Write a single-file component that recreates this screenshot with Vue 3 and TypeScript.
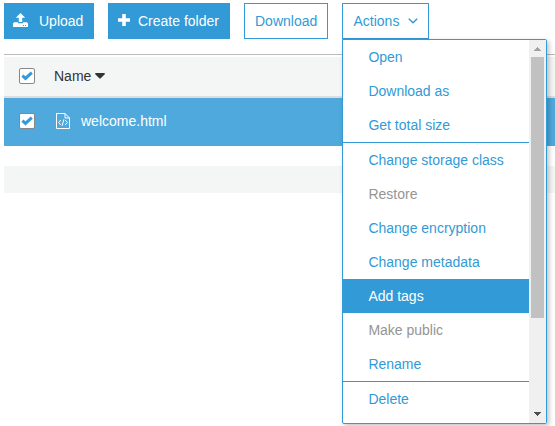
<script setup lang="ts">
interface MenuItem {
  label: string
  disabled?: boolean
  active?: boolean
}

const groups: MenuItem[][] = [
  [{ label: 'Open' }, { label: 'Download as' }, { label: 'Get total size' }],
  [
    { label: 'Change storage class' },
    { label: 'Restore', disabled: true },
    { label: 'Change encryption' },
    { label: 'Change metadata' },
    { label: 'Add tags', active: true },
    { label: 'Make public', disabled: true },
    { label: 'Rename' },
  ],
  [{ label: 'Delete' }],
]
</script>

<template>
  <main class="page">
    <div class="toolbar">
      <button class="btn primary upload">
        <svg width="15" height="14" viewBox="0 0 15 14" fill="currentColor">
          <path d="M7.5 0 L12.2 4.8 H9.2 V9 H5.8 V4.8 H2.8 Z" />
          <path fill-rule="evenodd" d="M1 9.3 H5 V10.3 H10 V9.3 H14 L15 10.5 V14 H0 V10.5 Z M10 12 V13 H11 V12 Z M12 12 V13 H13 V12 Z" />
        </svg>
        <span>Upload</span>
      </button>
      <button class="btn primary create">
        <svg width="12" height="12" viewBox="0 0 12 12" fill="currentColor">
          <path d="M4.2 0 H7.8 V4.2 H12 V7.8 H7.8 V12 H4.2 V7.8 H0 V4.2 H4.2 Z" />
        </svg>
        <span>Create folder</span>
      </button>
      <button class="btn download"><span>Download</span></button>
      <div class="dropdown">
        <button class="btn actions">
          <span>Actions</span>
          <svg width="10" height="6" viewBox="0 0 10 6" fill="none" stroke="currentColor" stroke-width="1.5">
            <path d="M.8 .8 L5 4.8 L9.2 .8" />
          </svg>
        </button>
        <div class="menu">
          <div class="items">
            <ul v-for="(group, index) in groups" :key="index" class="group">
              <li
                v-for="item in group"
                :key="item.label"
                class="item"
                :class="{ disabled: item.disabled, active: item.active }"
              >
                {{ item.label }}
              </li>
            </ul>
          </div>
          <div class="scrollbar">
            <svg class="arrow" width="17" height="17" viewBox="0 0 17 17" fill="#a3a3a3" shape-rendering="crispEdges">
              <path d="M8 7 H9 V8 H10 V9 H11 V10 H12 V11 H5 V10 H6 V9 H7 V8 H8 Z" />
            </svg>
            <div class="thumb"></div>
            <svg class="arrow" width="17" height="17" viewBox="0 0 17 17" fill="#505050" shape-rendering="crispEdges">
              <path d="M5 6 H12 V7 H11 V8 H10 V9 H9 V10 H8 V9 H7 V8 H6 V7 H5 Z" />
            </svg>
          </div>
        </div>
      </div>
    </div>

    <div class="table">
      <div class="row head">
        <span class="check">
          <svg width="12" height="10" viewBox="0 0 12 10" fill="none" stroke="#329ad6" stroke-width="3">
            <path d="M1.4 4.6 L4.5 7.4 L10.8 1.6" />
          </svg>
        </span>
        <span class="name">Name</span>
        <svg class="sort" width="10" height="6" viewBox="0 0 10 6" fill="#333">
          <path d="M0 1 Q0 0 1 0 H9 Q10 0 10 1 L5.5 5.6 H4.5 Z" />
        </svg>
      </div>
      <div class="row selected">
        <span class="check">
          <svg width="12" height="10" viewBox="0 0 12 10" fill="none" stroke="#329ad6" stroke-width="3">
            <path d="M1.4 4.6 L4.5 7.4 L10.8 1.6" />
          </svg>
        </span>
        <svg class="file" width="14" height="16" viewBox="0 0 14 16" fill="none" stroke="#fff">
          <path d="M.5 .5 H9 L13.5 5 V15.5 H.5 Z M9 .5 V5 H13.5" />
          <path d="M4.8 7 L2.6 9.5 L4.8 12 M9.2 7 L11.4 9.5 L9.2 12 M7.9 6.3 L6.1 12.9" />
        </svg>
        <span class="filename">welcome.html</span>
      </div>
      <div class="stripe"></div>
    </div>
  </main>
</template>

<style>
body {
  background: #fff;
  overflow: hidden;
}
</style>

<style scoped>
* {
  box-sizing: border-box;
}
svg {
  display: block;
  flex: none;
}
.page {
  width: 555px;
  height: 426px;
  padding: 3px 0 0 4px;
  overflow: hidden;
  font-family: 'Liberation Sans', Arial, sans-serif;
  font-size: 14px;
  color: #333;
}
.toolbar {
  display: flex;
  gap: 14px;
}
.btn {
  display: flex;
  align-items: center;
  height: 36px;
  margin: 0;
  padding: 0 0 0 10px;
  border: 1px solid #329ad6;
  border-radius: 0;
  background: #fff;
  color: #329ad6;
  font: inherit;
  white-space: nowrap;
}
.primary {
  background: #329ad6;
  color: #fff;
}
.upload {
  width: 90px;
  padding-left: 8px;
  gap: 11px;
}
.create {
  width: 122px;
  padding-left: 9px;
  gap: 8px;
}
.create svg,
.upload svg {
  margin-bottom: 2px;
}
.download {
  width: 84px;
}
.actions {
  width: 87px;
  padding-left: 10.5px;
  gap: 8.5px;
}
.dropdown {
  position: relative;
}
.menu {
  position: absolute;
  top: 36px;
  left: 0;
  z-index: 1;
  display: flex;
  width: 205px;
  height: 385px;
  border: 1px solid #329ad6;
  border-radius: 0 2px 2px 2px;
  background: #fff;
  box-shadow: 2px 2px 5px rgba(0, 0, 0, 0.25);
}
.items {
  flex: 1;
}
.group {
  margin: 0;
  padding: 0;
  list-style: none;
}
.group + .group {
  border-top: 1px solid #329ad6;
}
.item {
  height: 34px;
  padding-left: 25.4px;
  line-height: 34px;
  color: #329ad6;
  white-space: nowrap;
}
.item.disabled {
  color: #959595;
}
.item.active {
  background: #329ad6;
  color: #fff;
}
.scrollbar {
  display: flex;
  flex-direction: column;
  justify-content: space-between;
  width: 17px;
  background: #f0f0f0;
}
.thumb {
  width: 13px;
  height: 261px;
  margin: 0 auto auto 2px;
  background: #c1c1c1;
}
.table {
  margin-top: 15px;
  padding-top: 2px;
  border-top: 1px solid #bbb;
}
.row {
  display: flex;
  align-items: center;
  padding-left: 15px;
}
.head {
  height: 41px;
  padding-bottom: 1px;
  border-bottom: 2px solid #ddd;
  background: #f4f6f6;
}
.selected {
  height: 48px;
  padding-bottom: 2px;
  background: #4fa9dd;
  color: #fff;
}
.check {
  display: flex;
  align-items: center;
  justify-content: center;
  width: 16px;
  height: 16px;
  border: 1px solid #888;
  border-radius: 2px;
  background: #fff;
}
.name {
  margin-left: 19px;
}
.sort {
  margin-left: 4px;
}
.file {
  margin-left: 21px;
}
.filename {
  margin-left: 11px;
}
.stripe {
  height: 27px;
  margin-top: 20px;
  background: #f4f6f6;
}
</style>
